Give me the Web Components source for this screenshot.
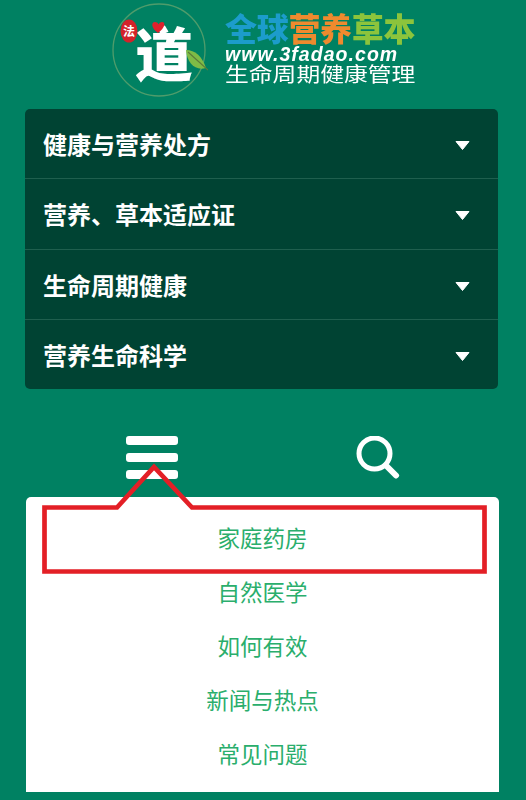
<!DOCTYPE html>
<html lang="zh-CN">
<head>
<meta charset="utf-8">
<title>全球营养草本</title>
<style>
  html, body { margin: 0; padding: 0; background: #008162; }
  body { position: relative; height: 800px; overflow: hidden; font-family: "Noto Sans CJK SC", "Liberation Sans", sans-serif; }
</style>
</head>
<body>
<site-logo></site-logo>
<accordion-list>
  <accordion-row>健康与营养处方</accordion-row>
  <accordion-row>营养、草本适应证</accordion-row>
  <accordion-row>生命周期健康</accordion-row>
  <accordion-row>营养生命科学</accordion-row>
</accordion-list>
<tool-bar></tool-bar>
<drop-menu>
  <a>家庭药房</a>
  <a>自然医学</a>
  <a>如何有效</a>
  <a>新闻与热点</a>
  <a>常见问题</a>
</drop-menu>
<red-callout></red-callout>

<script>
class SiteLogo extends HTMLElement {
  constructor(){
    super();
    this.attachShadow({mode: "open"});
  }

  static get styles(){
    return /* css */`
      :host {
        display: flex;
        height: 109px;
        padding-left: 110px;
        box-sizing: border-box;
        column-gap: 17px;
        font-family: "Noto Sans CJK SC", sans-serif;
      }

      svg {
        width: 98px;
        height: 100px;
        flex: none;
      }

      .words {
        display: flex;
        flex-direction: column;
        align-items: flex-start;
        padding-top: 9px;
        filter: blur(0.35px);
      }

      .title {
        font-size: 32px;
        line-height: 37px;
        font-weight: 900;
        letter-spacing: -0.3px;
        white-space: nowrap;
      }

      .blue { color: #1c9ccb; }
      .orange { color: #ee8a2e; }
      .lime { color: #8cc43c; }

      .url {
        font-family: "Liberation Sans", sans-serif;
        font-size: 19.5px;
        line-height: 17px;
        font-weight: 700;
        font-style: italic;
        letter-spacing: 1.05px;
        color: #fff;
        white-space: nowrap;
      }

      .sub {
        font-size: 23.800px;
        line-height: 22px;
        color: #fff;
        white-space: nowrap;
        transform: scaleY(0.84);
        transform-origin: left center;
      }
    `
  }

  connectedCallback() {
    this.render();
  }

  render() {
    this.shadowRoot.innerHTML = /* html */`
    <style>${SiteLogo.styles}</style>
    <svg viewBox="0 0 98 100">
      <circle cx="49" cy="50" r="46" fill="none" stroke="#4f9c6b" stroke-width="1.3"/>
      <text x="54" y="76" text-anchor="middle" font-size="58" font-weight="900" fill="#fff" font-family="Noto Sans CJK SC, sans-serif">道</text>
      <ellipse cx="19" cy="31" rx="8.500" ry="11.500" fill="#d3222a"/>
      <text x="19" y="36" text-anchor="middle" font-size="12" font-weight="700" fill="#fff" font-family="Noto Sans CJK SC, sans-serif">法</text>
      <path d="M48 33 C41 28 41 22 45 22 C47 22 48 23 48.500 24.500 C49 23 50.500 22 52 22 C56 22 55 28 48 33Z" fill="#e0202c"/>
      <path d="M76 50 C85 50 92 56 96 68 C85 71 77 63 76 50Z" fill="#7fbb46"/>
      <path d="M78 52 L98 70" stroke="#5c7a3a" stroke-width="1.100"/>
    </svg>
    <div class="words">
      <div class="title"><span class="blue">全球</span><span class="orange">营养</span><span class="lime">草本</span></div>
      <div class="url">www.3fadao.com</div>
      <div class="sub">生命周期健康管理</div>
    </div>
    `
  }
}

class AccordionList extends HTMLElement {
  constructor(){
    super();
    this.attachShadow({mode: "open"});
  }

  static get styles(){
    return /* css */`
      :host {
        display: block;
        width: 473px;
        margin-left: 25px;
        background-color: #004333;
        border-radius: 5px;
      }
    `
  }

  connectedCallback() {
    this.shadowRoot.innerHTML = /* html */`
    <style>${AccordionList.styles}</style>
    <slot></slot>
    `
  }
}

class AccordionRow extends HTMLElement {
  constructor(){
    super();
    this.attachShadow({mode: "open"});
  }

  static get styles(){
    return /* css */`
      :host {
        display: flex;
        align-items: center;
        justify-content: space-between;
        box-sizing: border-box;
        height: 70.330px;
        padding: 0 28px 0 18px;
        border-bottom: 1px solid #1f5f4e;
        color: #fff;
        font-size: 24px;
        font-weight: 700;
      }

      :host(:last-child) {
        height: 69px;
        border-bottom: none;
      }

      .arrow {
        width: 15px;
        height: 9px;
        flex: none;
        margin-top: 4px;
      }
    `
  }

  connectedCallback() {
    this.shadowRoot.innerHTML = /* html */`
    <style>${AccordionRow.styles}</style>
    <span><slot></slot></span>
    <svg class="arrow" viewBox="0 0 15 9"><path d="M1 .5H14L7.500 8.500Z" fill="#fff" stroke="#fff" stroke-width="1" stroke-linejoin="round"/></svg>
    `
  }
}

class ToolBar extends HTMLElement {
  constructor(){
    super();
    this.attachShadow({mode: "open"});
  }

  static get styles(){
    return /* css */`
      :host {
        display: grid;
        grid-template-columns: 226px 226px;
        justify-items: center;
        box-sizing: border-box;
        height: 108px;
        padding: 47px 0 0 39px;
      }

      .burger {
        display: flex;
        flex-direction: column;
        row-gap: 8px;
        width: 52px;
      }

      .burger span {
        height: 9px;
        border-radius: 3px;
        background-color: #fff;
      }

      svg {
        width: 44px;
        height: 43px;
      }
    `
  }

  connectedCallback() {
    this.shadowRoot.innerHTML = /* html */`
    <style>${ToolBar.styles}</style>
    <div class="burger"><span></span><span></span><span></span></div>
    <svg viewBox="0 0 44 43">
      <circle cx="18.500" cy="17.500" r="15.500" fill="none" stroke="#fff" stroke-width="5"/>
      <path d="M30 29.500 L40 39.500" stroke="#fff" stroke-width="6" stroke-linecap="round"/>
    </svg>
    `
  }
}

class DropMenu extends HTMLElement {
  constructor(){
    super();
    this.attachShadow({mode: "open"});
  }

  static get styles(){
    return /* css */`
      :host {
        display: block;
        box-sizing: border-box;
        width: 473px;
        height: 295px;
        margin-left: 26px;
        padding: 13px 0 12px;
        background-color: #fff;
        border-radius: 5px 5px 0 0;
        text-align: center;
      }

      ::slotted(a) {
        display: block;
        height: 54px;
        line-height: 54px;
        font-size: 22.500px;
        font-weight: 400;
        color: #2aae6c;
      }
    `
  }

  connectedCallback() {
    this.shadowRoot.innerHTML = /* html */`
    <style>${DropMenu.styles}</style>
    <slot></slot>
    `
  }
}

// annotation drawn over the page, not part of the flow
class RedCallout extends HTMLElement {
  constructor(){
    super();
    this.attachShadow({mode: "open"});
  }

  connectedCallback() {
    this.shadowRoot.innerHTML = /* html */`
    <style>
      :host { position: absolute; left: 0; top: 0; pointer-events: none; }
      svg { display: block; width: 526px; height: 800px; }
    </style>
    <svg viewBox="0 0 526 800">
      <path d="M44.500 571.500V507.500H117L154 467L192 507.500H484.500V571.500Z" fill="none" stroke="#e31f26" stroke-width="4.700"/>
    </svg>
    `
  }
}

customElements.define('site-logo', SiteLogo);
customElements.define('accordion-list', AccordionList);
customElements.define('accordion-row', AccordionRow);
customElements.define('tool-bar', ToolBar);
customElements.define('drop-menu', DropMenu);
customElements.define('red-callout', RedCallout);
</script>
</body>
</html>
